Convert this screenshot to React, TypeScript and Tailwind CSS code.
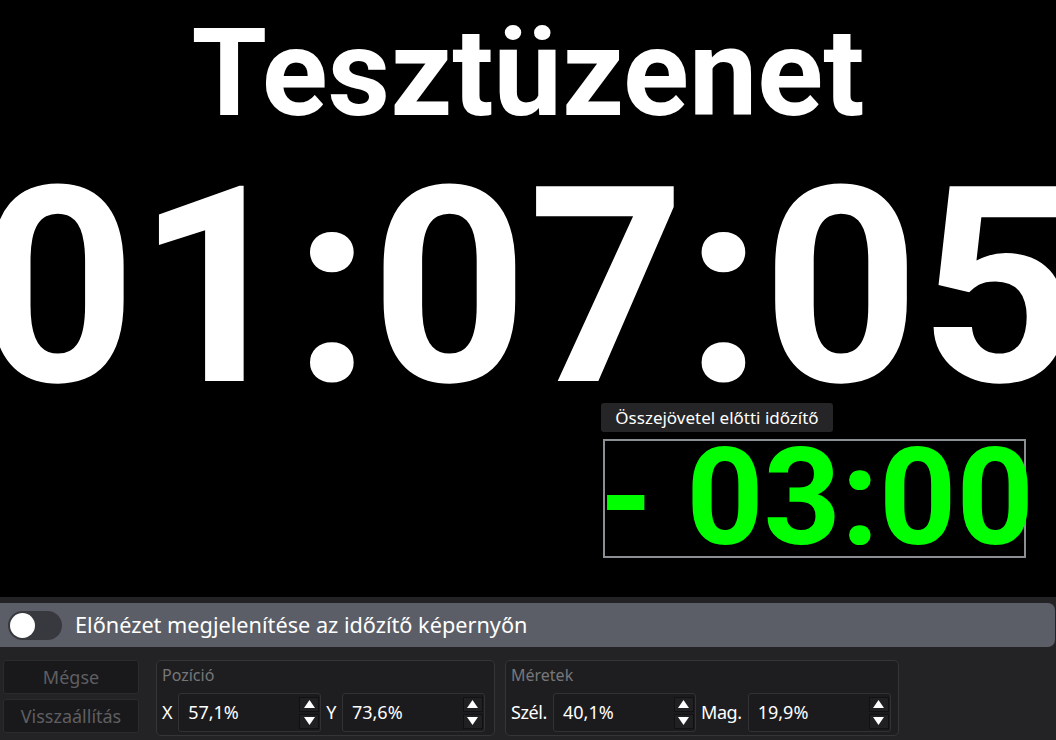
import React from "react";

const ui = { fontFamily: '"Noto Sans", "Open Sans", sans-serif' };
const roboto = { fontFamily: 'Roboto, "Liberation Sans", sans-serif' };

function Spinner() {
  return (
    <div className="flex flex-col gap-[2px] mr-[1px]">
      <div className="flex h-[15px] w-[20px] items-center justify-center border border-[#111113] bg-[#202022]">
        <svg width="11" height="8" viewBox="0 0 11 8">
          <path d="M5.5 0 L11 8 L0 8 Z" fill="#ffffff" />
        </svg>
      </div>
      <div className="flex h-[15px] w-[20px] items-center justify-center border border-[#111113] bg-[#202022]">
        <svg width="11" height="8" viewBox="0 0 11 8">
          <path d="M0 0 L11 0 L5.5 8 Z" fill="#ffffff" />
        </svg>
      </div>
    </div>
  );
}

function NumberField({ value }: { value: string }) {
  return (
    <div className="flex h-[39px] w-[143px] items-center justify-between rounded-[3px] border border-[#323235] bg-[#1b1b1d] pl-[9px]">
      <span className="text-[18px] text-white">{value}</span>
      <Spinner />
    </div>
  );
}

function Group({
  title,
  fields,
  width,
}: {
  title: string;
  fields: { label: string; value: string }[];
  width: string;
}) {
  return (
    <div className={`flex h-[76px] flex-col rounded-[5px] border border-[#353538] bg-[#1e1e20] px-[5px] ${width}`}>
      <div className="mt-[3px] text-[16px] leading-[22px] text-[#77777a]">{title}</div>
      <div className="mt-[7px] flex items-center">
        {fields.map((f, i) => (
          <div key={f.label} className={`flex items-center ${i > 0 ? "ml-[5px]" : ""}`}>
            <span className="mr-[6px] text-[18px] tracking-[-0.4px] text-white">{f.label}</span>
            <NumberField value={f.value} />
          </div>
        ))}
      </div>
    </div>
  );
}

export default function App() {
  return (
    <div className="flex h-[740px] w-[1056px] flex-col overflow-hidden bg-black" style={ui}>
      {/* timer screen preview */}
      <div className="relative h-[597px] w-full" style={roboto}>
        <div className="mt-[13px] text-center text-[122px] font-bold leading-none text-white">
          Tesztüzenet
        </div>
        <div className="mt-[16px] flex justify-center whitespace-nowrap text-[274px] font-bold leading-none text-white">
          01:07:05
        </div>

        <div
          className="absolute left-[601px] top-[403px] flex h-[29px] w-[232px] items-center justify-center rounded-[3px] bg-[#252527] text-[17px] text-white"
          style={ui}
        >
          Összejövetel előtti időzítő
        </div>
        <div className="absolute left-[57.1%] top-[73.6%] flex h-[19.9%] w-[40.1%] items-center justify-center overflow-visible border-2 border-[#8b8e95] pl-[4px]">
          <span className="whitespace-nowrap text-[135px] font-bold leading-none text-[#00ff00]">
            - 03:00
          </span>
        </div>
      </div>

      {/* settings panel */}
      <div className="flex flex-1 flex-col bg-[#232325] pt-[6px]">
        <div className="mr-[1px] flex h-[44px] items-center rounded-r-[7px] bg-[#5b5e67] pl-[8px]">
          <div className="flex h-[29px] w-[54px] items-center rounded-full bg-[#38393e] pl-[2px]">
            <div className="h-[25px] w-[25px] rounded-full bg-white" />
          </div>
          <span className="ml-[13px] text-[21.7px] text-white">
            Előnézet megjelenítése az időzítő képernyőn
          </span>
        </div>

        <div className="mt-[13px] flex items-start pl-[3px]">
          <div className="flex w-[136px] flex-col gap-[5px]">
            <div className="flex h-[34px] items-center justify-center rounded-[3px] border border-[#2b2b2e] bg-[#19191b] text-[18px] text-[#5f5f62]">
              Mégse
            </div>
            <div className="flex h-[34px] items-center justify-center rounded-[3px] border border-[#2b2b2e] bg-[#19191b] text-[18px] text-[#5f5f62]">
              Visszaállítás
            </div>
          </div>
          <div className="ml-[17px]">
            <Group
              title="Pozíció"
              width="w-[339px]"
              fields={[
                { label: "X", value: "57,1%" },
                { label: "Y", value: "73,6%" },
              ]}
            />
          </div>
          <div className="ml-[10px]">
            <Group
              title="Méretek"
              width="w-[394px]"
              fields={[
                { label: "Szél.", value: "40,1%" },
                { label: "Mag.", value: "19,9%" },
              ]}
            />
          </div>
        </div>
      </div>
    </div>
  );
}
